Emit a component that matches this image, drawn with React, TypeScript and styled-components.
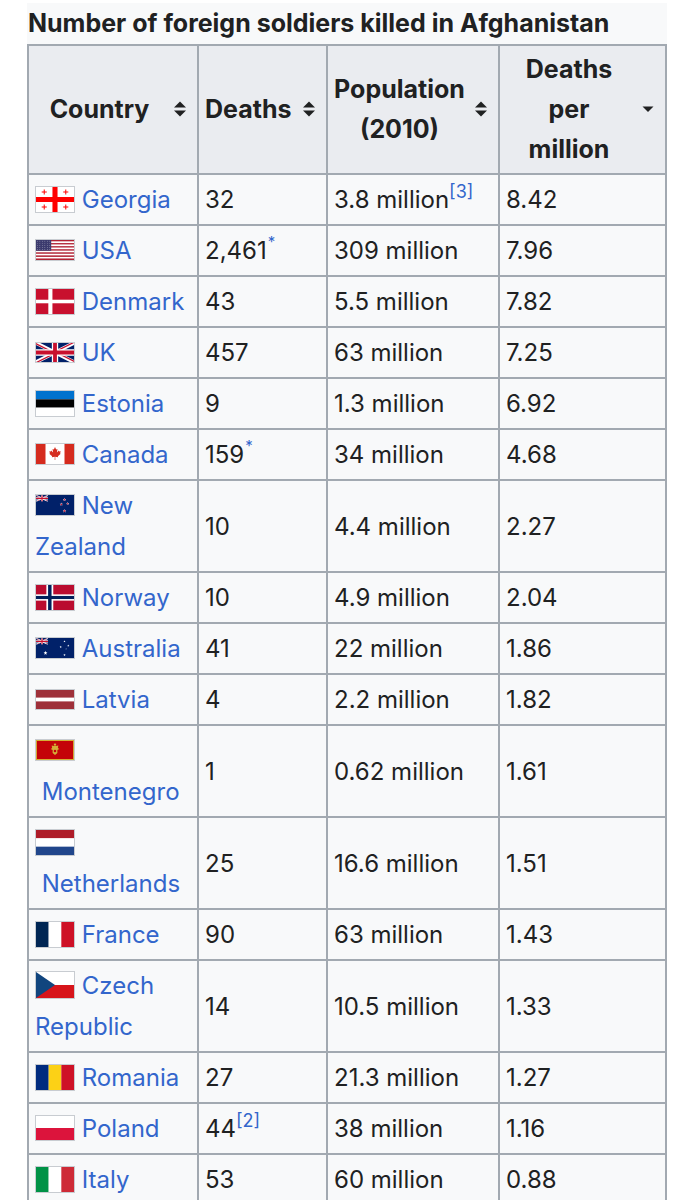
import React, { useId } from "react";
import styled, { createGlobalStyle } from "styled-components";

const GlobalStyle = createGlobalStyle`
  html, body { margin: 0; padding: 0; background: #ffffff; }
  body { font-family: Inter, "Noto Sans", "Liberation Sans", sans-serif; color: #202122; }
`;

const Page = styled.div`
  padding: 3px 0 0 27px;
`;

const Table = styled.table`
  border-collapse: collapse;
  table-layout: fixed;
  width: 638px;
  background: #f8f9fa;
  font-size: 24px;
  color: #202122;
`;

const Caption = styled.caption`
  caption-side: top;
  text-align: left;
  font-weight: 700;
  font-size: 25px;
  line-height: 40px;
  padding: 0 1px 1px;
  background: #f8f9fa;
  color: #202122;
  white-space: nowrap;
`;

const HeadCell = styled.th`
  background: #eaecf0;
  border: 2px solid #a2a9b1;
  padding: 3px 11px 4px 6px;
  line-height: 40px;
  font-size: 25px;
  font-weight: 700;
  vertical-align: middle;
`;

const HeadInner = styled.div`
  display: flex;
  align-items: center;
  gap: 10px;
`;

const HeadText = styled.span<{ $align: "left" | "center" }>`
  flex: 1;
  text-align: ${(p) => p.$align};
`;

const Cell = styled.td`
  border: 2px solid #a2a9b1;
  padding: 4px 6px;
  line-height: 41px;
  vertical-align: middle;
  white-space: nowrap;
  overflow: hidden;
`;

const Link = styled.a`
  color: #3366cc;
  text-decoration: none;
`;

const Sup = styled.sup<{ $star?: boolean }>`
  color: #3366cc;
  font-size: ${(p) => (p.$star ? "15px" : "18px")};
  line-height: 1;
  vertical-align: ${(p) => (p.$star ? "12px" : "10px")};
  margin-left: ${(p) => (p.$star ? "1px" : "0")};
`;

const FlagBox = styled.span<{ $h: number }>`
  display: inline-block;
  width: 38px;
  height: ${(p) => p.$h}px;
  border: 1px solid #c8ccd1;
  vertical-align: middle;
  margin-top: -4px;
  line-height: 0;
  svg {
    display: block;
    width: 38px;
    height: ${(p) => p.$h}px;
  }
`;

const SortIcon = ({ down }: { down?: boolean }) => (
  <svg width="12" height="18" viewBox="0 0 12 18" style={{ flex: "none" }}>
    {!down && <path d="M0 7.5 L6 1.5 L12 7.5 Z" fill="#202122" />}
    <path d={down ? "M0.5 6.5 L11.5 6.5 L6 12 Z" : "M0 10.5 L12 10.5 L6 16.5 Z"} fill="#202122" />
  </svg>
);

const UnionJack = ({ id }: { id: string }) => (
  <g>
    <clipPath id={`${id}s`}>
      <path d="M0,0 v30 h60 v-30 z" />
    </clipPath>
    <clipPath id={`${id}t`}>
      <path d="M30,15 h30 v15 z v15 h-30 z h-30 v-15 z v-15 h30 z" />
    </clipPath>
    <g clipPath={`url(#${id}s)`}>
      <path d="M0,0 v30 h60 v-30 z" fill="#012169" />
      <path d="M0,0 L60,30 M60,0 L0,30" stroke="#fff" strokeWidth="6" />
      <path d="M0,0 L60,30 M60,0 L0,30" clipPath={`url(#${id}t)`} stroke="#C8102E" strokeWidth="4" />
      <path d="M30,0 v30 M0,15 h60" stroke="#fff" strokeWidth="10" />
      <path d="M30,0 v30 M0,15 h60" stroke="#C8102E" strokeWidth="6" />
    </g>
  </g>
);

const star = (cx: number, cy: number, r: number) => {
  const pts: string[] = [];
  for (let i = 0; i < 10; i++) {
    const rr = i % 2 === 0 ? r : r * 0.42;
    const a = -Math.PI / 2 + (i * Math.PI) / 5;
    pts.push(`${(cx + rr * Math.cos(a)).toFixed(2)},${(cy + rr * Math.sin(a)).toFixed(2)}`);
  }
  return pts.join(" ");
};

type FlagKind =
  | "georgia" | "usa" | "denmark" | "uk" | "estonia" | "canada" | "nz" | "norway"
  | "australia" | "latvia" | "montenegro" | "netherlands" | "france" | "czech"
  | "romania" | "poland" | "italy";

const flagHeights: Record<FlagKind, number> = {
  georgia: 25, usa: 20, denmark: 25, uk: 19, estonia: 25, canada: 20, nz: 20, norway: 25,
  australia: 20, latvia: 19, montenegro: 20, netherlands: 25, france: 25, czech: 26,
  romania: 25, poland: 24, italy: 25,
};

const FlagArt = ({ kind }: { kind: FlagKind }) => {
  const uid = useId().replace(/:/g, "");
  switch (kind) {
    case "georgia":
      return (
        <svg viewBox="0 0 300 200" preserveAspectRatio="none">
          <rect width="300" height="200" fill="#fff" />
          <rect x="0" y="80" width="300" height="40" fill="#ff0000" />
          <rect x="130" y="0" width="40" height="200" fill="#ff0000" />
          {[[65, 40], [235, 40], [65, 160], [235, 160]].map(([x, y], i) => (
            <g key={i} fill="#ff0000">
              <rect x={x - 4} y={y - 20} width="8" height="40" />
              <rect x={x - 20} y={y - 4} width="40" height="8" />
            </g>
          ))}
        </svg>
      );
    case "usa":
      return (
        <svg viewBox="0 0 190 100" preserveAspectRatio="none">
          {Array.from({ length: 13 }).map((_, i) => (
            <rect key={i} x="0" y={(i * 100) / 13} width="190" height={100 / 13 + 0.2} fill={i % 2 === 0 ? "#b22234" : "#fff"} />
          ))}
          <rect x="0" y="0" width="76" height={(700 / 13)} fill="#3c3b6e" />
          {Array.from({ length: 5 }).map((_, r) =>
            Array.from({ length: 6 }).map((_, c) => (
              <circle key={`${r}-${c}`} cx={7 + c * 12.4} cy={6 + r * 10.3} r="1.8" fill="#fff" opacity="0.8" />
            ))
          )}
        </svg>
      );
    case "denmark":
      return (
        <svg viewBox="0 0 37 28" preserveAspectRatio="none">
          <rect width="37" height="28" fill="#c8102e" />
          <rect x="12" y="0" width="4" height="28" fill="#fff" />
          <rect x="0" y="12" width="37" height="4" fill="#fff" />
        </svg>
      );
    case "uk":
      return (
        <svg viewBox="0 0 60 30" preserveAspectRatio="none">
          <UnionJack id={`uk${uid}`} />
        </svg>
      );
    case "estonia":
      return (
        <svg viewBox="0 0 33 21" preserveAspectRatio="none">
          <rect width="33" height="7" fill="#0072ce" />
          <rect y="7" width="33" height="7" fill="#000" />
          <rect y="14" width="33" height="7" fill="#fff" />
        </svg>
      );
    case "canada":
      return (
        <svg viewBox="0 0 40 20" preserveAspectRatio="none">
          <rect width="40" height="20" fill="#fff" />
          <rect width="10" height="20" fill="#d52b1e" />
          <rect x="30" width="10" height="20" fill="#d52b1e" />
          <polygon
            fill="#d52b1e"
            points="20,3 21.2,5.6 22.6,5 22,8.4 24,6.4 24.5,7.6 26,7.3 25.3,9.4 26,9.8 23,12.2 23.3,13.2 20.3,12.8 20.3,16 19.7,16 19.7,12.8 16.7,13.2 17,12.2 14,9.8 14.7,9.4 14,7.3 15.5,7.6 16,6.4 18,8.4 17.4,5 18.8,5.6"
          />
        </svg>
      );
    case "nz":
      return (
        <svg viewBox="0 0 120 60" preserveAspectRatio="none">
          <rect width="120" height="60" fill="#012169" />
          <svg x="0" y="0" width="60" height="30" viewBox="0 0 60 30">
            <UnionJack id={`nz${uid}`} />
          </svg>
          {[[90, 14, 4], [80, 28, 4], [100, 26, 3.5], [90, 48, 4.5]].map(([x, y, r], i) => (
            <g key={i}>
              <polygon points={star(x, y, r + 1.4)} fill="#fff" />
              <polygon points={star(x, y, r)} fill="#c8102e" />
            </g>
          ))}
        </svg>
      );
    case "norway":
      return (
        <svg viewBox="0 0 22 16" preserveAspectRatio="none">
          <rect width="22" height="16" fill="#ba0c2f" />
          <rect x="6" width="4" height="16" fill="#fff" />
          <rect y="6" width="22" height="4" fill="#fff" />
          <rect x="7" width="2" height="16" fill="#00205b" />
          <rect y="7" width="22" height="2" fill="#00205b" />
        </svg>
      );
    case "australia":
      return (
        <svg viewBox="0 0 120 60" preserveAspectRatio="none">
          <rect width="120" height="60" fill="#012169" />
          <svg x="0" y="0" width="60" height="30" viewBox="0 0 60 30">
            <UnionJack id={`au${uid}`} />
          </svg>
          <polygon points={star(30, 45, 6.5)} fill="#fff" />
          {[[90, 10, 3.5], [78, 27, 3.5], [102, 23, 3.5], [90, 51, 3.8], [95, 33, 2]].map(([x, y, r], i) => (
            <polygon key={i} points={star(x, y, r)} fill="#fff" />
          ))}
        </svg>
      );
    case "latvia":
      return (
        <svg viewBox="0 0 20 10" preserveAspectRatio="none">
          <rect width="20" height="10" fill="#9e3039" />
          <rect y="4" width="20" height="2" fill="#fff" />
        </svg>
      );
    case "montenegro":
      return (
        <svg viewBox="0 0 40 20" preserveAspectRatio="none">
          <rect width="40" height="20" fill="#d4af37" />
          <rect x="1" y="1" width="38" height="18" fill="#c40308" />
          <path
            d="M20 5 L21 6 L23.5 5.5 L23 8 L24.5 9 L22.5 10 L22.5 13 L20 15 L17.5 13 L17.5 10 L15.5 9 L17 8 L16.5 5.5 L19 6 Z"
            fill="#d4af37"
          />
          <rect x="18.8" y="3.6" width="2.4" height="1.6" fill="#d4af37" />
          <circle cx="20" cy="11" r="1.3" fill="#c40308" />
        </svg>
      );
    case "netherlands":
      return (
        <svg viewBox="0 0 9 6" preserveAspectRatio="none">
          <rect width="9" height="2" fill="#ae1c28" />
          <rect y="2" width="9" height="2" fill="#fff" />
          <rect y="4" width="9" height="2" fill="#21468b" />
        </svg>
      );
    case "france":
      return (
        <svg viewBox="0 0 9 6" preserveAspectRatio="none">
          <rect width="3" height="6" fill="#002654" />
          <rect x="3" width="3" height="6" fill="#fff" />
          <rect x="6" width="3" height="6" fill="#ce1126" />
        </svg>
      );
    case "czech":
      return (
        <svg viewBox="0 0 900 600" preserveAspectRatio="none">
          <rect width="900" height="600" fill="#d7141a" />
          <rect width="900" height="300" fill="#fff" />
          <path d="M0 0 L450 300 L0 600 Z" fill="#11457e" />
        </svg>
      );
    case "romania":
      return (
        <svg viewBox="0 0 9 6" preserveAspectRatio="none">
          <rect width="3" height="6" fill="#002b7f" />
          <rect x="3" width="3" height="6" fill="#fcd116" />
          <rect x="6" width="3" height="6" fill="#ce1126" />
        </svg>
      );
    case "poland":
      return (
        <svg viewBox="0 0 16 10" preserveAspectRatio="none">
          <rect width="16" height="5" fill="#fff" />
          <rect y="5" width="16" height="5" fill="#dc143c" />
        </svg>
      );
    case "italy":
      return (
        <svg viewBox="0 0 9 6" preserveAspectRatio="none">
          <rect width="3" height="6" fill="#009246" />
          <rect x="3" width="3" height="6" fill="#fff" />
          <rect x="6" width="3" height="6" fill="#ce2b37" />
        </svg>
      );
  }
};

const Flag = ({ kind }: { kind: FlagKind }) => (
  <FlagBox $h={flagHeights[kind]}>
    <FlagArt kind={kind} />
  </FlagBox>
);

type Row = {
  flag: FlagKind;
  name: string;
  second?: string;
  wrap?: "inline" | "split" | "below";
  deaths: string;
  deathsNote?: string;
  pop: string;
  popRef?: string;
  dpm: string;
};

const rows: Row[] = [
  { flag: "georgia", name: "Georgia", deaths: "32", pop: "3.8 million", popRef: "[3]", dpm: "8.42" },
  { flag: "usa", name: "USA", deaths: "2,461", deathsNote: "*", pop: "309 million", dpm: "7.96" },
  { flag: "denmark", name: "Denmark", deaths: "43", pop: "5.5 million", dpm: "7.82" },
  { flag: "uk", name: "UK", deaths: "457", pop: "63 million", dpm: "7.25" },
  { flag: "estonia", name: "Estonia", deaths: "9", pop: "1.3 million", dpm: "6.92" },
  { flag: "canada", name: "Canada", deaths: "159", deathsNote: "*", pop: "34 million", dpm: "4.68" },
  { flag: "nz", name: "New", second: "Zealand", wrap: "split", deaths: "10", pop: "4.4 million", dpm: "2.27" },
  { flag: "norway", name: "Norway", deaths: "10", pop: "4.9 million", dpm: "2.04" },
  { flag: "australia", name: "Australia", deaths: "41", pop: "22 million", dpm: "1.86" },
  { flag: "latvia", name: "Latvia", deaths: "4", pop: "2.2 million", dpm: "1.82" },
  { flag: "montenegro", name: "Montenegro", wrap: "below", deaths: "1", pop: "0.62 million", dpm: "1.61" },
  { flag: "netherlands", name: "Netherlands", wrap: "below", deaths: "25", pop: "16.6 million", dpm: "1.51" },
  { flag: "france", name: "France", deaths: "90", pop: "63 million", dpm: "1.43" },
  { flag: "czech", name: "Czech", second: "Republic", wrap: "split", deaths: "14", pop: "10.5 million", dpm: "1.33" },
  { flag: "romania", name: "Romania", deaths: "27", pop: "21.3 million", dpm: "1.27" },
  { flag: "poland", name: "Poland", deaths: "44", deathsNote: "[2]", pop: "38 million", dpm: "1.16" },
  { flag: "italy", name: "Italy", deaths: "53", pop: "60 million", dpm: "0.88" },
];

const CountryContent = ({ row }: { row: Row }) => {
  if (row.wrap === "below") {
    return (
      <>
        <Flag kind={row.flag} />
        <br />
        <Link href="#">{"\u00a0" + row.name}</Link>
      </>
    );
  }
  if (row.wrap === "split") {
    return (
      <>
        <Flag kind={row.flag} /> <Link href="#">{row.name}</Link>
        <br />
        <Link href="#">{row.second}</Link>
      </>
    );
  }
  return (
    <>
      <Flag kind={row.flag} /> <Link href="#">{row.name}</Link>
    </>
  );
};

const Header = ({ children, align = "center", down }: { children: React.ReactNode; align?: "left" | "center"; down?: boolean }) => (
  <HeadCell>
    <HeadInner>
      <HeadText $align={align}>{children}</HeadText>
      <SortIcon down={down} />
    </HeadInner>
  </HeadCell>
);

export default function App() {
  return (
    <>
      <GlobalStyle />
      <Page>
        <Table>
          <Caption>Number of foreign soldiers killed in Afghanistan</Caption>
          <colgroup>
            <col style={{ width: 170 }} />
            <col style={{ width: 129 }} />
            <col style={{ width: 172 }} />
            <col style={{ width: 167 }} />
          </colgroup>
          <thead>
            <tr>
              <Header>Country</Header>
              <Header align="left">Deaths</Header>
              <Header>
                Population
                <br />
                (2010)
              </Header>
              <Header down>
                Deaths
                <br />
                per
                <br />
                million
              </Header>
            </tr>
          </thead>
          <tbody>
            {rows.map((r) => (
              <tr key={r.name}>
                <Cell>
                  <CountryContent row={r} />
                </Cell>
                <Cell>
                  {r.deaths}
                  {r.deathsNote && <Sup $star={r.deathsNote === "*"}>{r.deathsNote}</Sup>}
                </Cell>
                <Cell>
                  {r.pop}
                  {r.popRef && <Sup>{r.popRef}</Sup>}
                </Cell>
                <Cell>{r.dpm}</Cell>
              </tr>
            ))}
          </tbody>
        </Table>
      </Page>
    </>
  );
}
